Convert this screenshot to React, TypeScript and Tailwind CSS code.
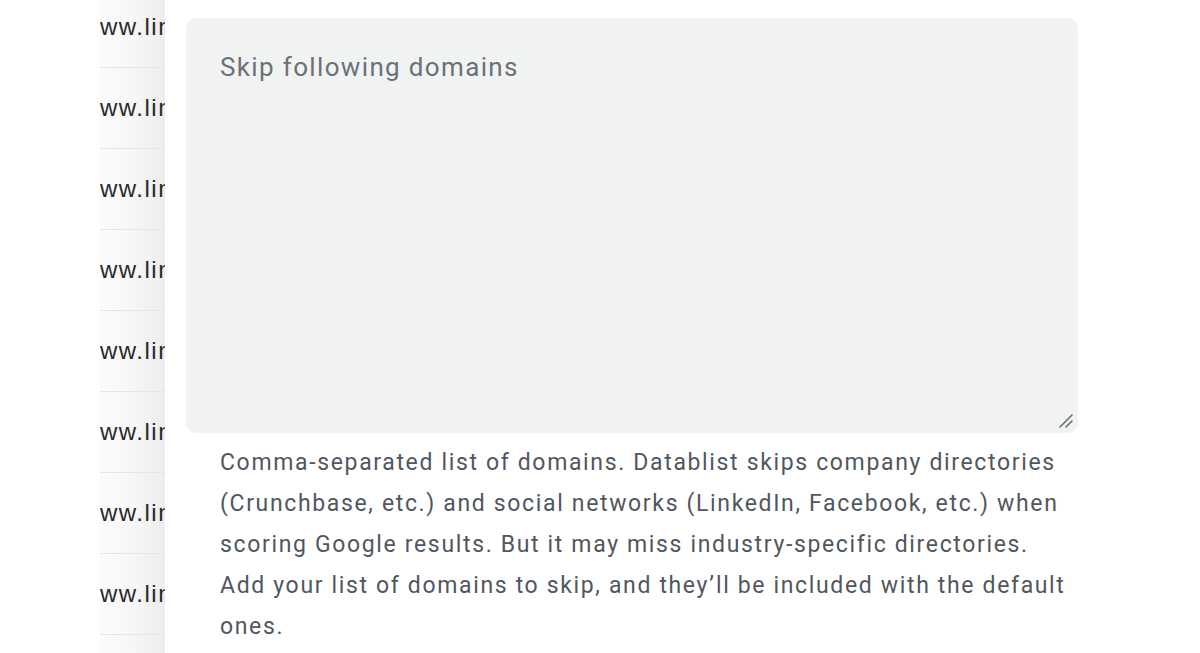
const rows = Array.from({ length: 9 }, (_, i) => i);

const helpLines = [
  "Comma-separated list of domains. Datablist skips company directories",
  "(Crunchbase, etc.) and social networks (LinkedIn, Facebook, etc.) when",
  "scoring Google results. But it may miss industry-specific directories.",
  "Add your list of domains to skip, and they’ll be included with the default",
  "ones.",
];

export default function App() {
  return (
    <div className="flex h-[653px] w-[1200px] overflow-hidden bg-white">
      {/* clipped url column behind the panel */}
      <div className="ml-[100px] flex w-[65px] shrink-0 flex-col bg-gradient-to-r from-[#fbfbfb] via-[#f7f7f7] to-[#ededed]">
        <div className="-mt-[13px] flex flex-col">
          {rows.map((r) => (
            <div
              key={r}
              className="flex h-[81px] items-center overflow-hidden whitespace-nowrap border-b border-[#e6e6e6] font-['Liberation_Sans',sans-serif] text-[24px] tracking-[1.5px] text-[#2a2a2a]"
            >
              ww.linkedin.com
            </div>
          ))}
        </div>
      </div>

      <div className="ml-[21px] w-[892px] shrink-0 pt-[18px]">
        <div className="relative">
          <textarea
            readOnly
            placeholder="Skip following domains"
            className="block h-[415px] w-full resize-none rounded-[10px] bg-[#f1f3f3] px-[34px] pt-[30px] font-['Roboto',sans-serif] text-[26px] leading-[39px] tracking-[1.35px] text-[#333] outline-none placeholder:text-[#6b7176]"
          />
          <svg
            className="absolute bottom-[4px] right-[4px]"
            width="16"
            height="16"
            viewBox="0 0 16 16"
          >
            <path d="M2 14 L14 2" stroke="#6b6f73" strokeWidth="1.6" strokeLinecap="round" />
            <path d="M8 14 L14 8" stroke="#6b6f73" strokeWidth="1.6" strokeLinecap="round" />
          </svg>
        </div>
        <p className="mt-[9px] pl-[34px] font-['Roboto',sans-serif] text-[23px] leading-[41px] tracking-[1.65px] text-[#50575e]">
          {helpLines.map((l) => (
            <span key={l} className="block whitespace-nowrap">
              {l}
            </span>
          ))}
        </p>
      </div>
    </div>
  );
}
